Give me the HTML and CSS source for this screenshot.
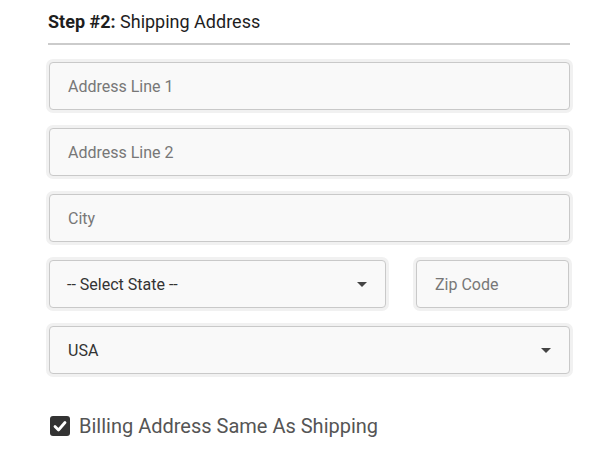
FILE: index.html
```html
<!DOCTYPE html>
<html>
<head>
<meta charset="utf-8">
<link rel="stylesheet" href="styles.css">
</head>
<body>
<div class="form">
  <h2 class="step"><b>Step #2:</b> Shipping Address</h2>
  <div class="fields">
    <div class="field"><span class="ph">Address Line 1</span></div>
    <div class="field"><span class="ph">Address Line 2</span></div>
    <div class="field"><span class="ph">City</span></div>
    <div class="row">
      <div class="field select state"><span class="val">-- Select State --</span><span class="caret"></span></div>
      <div class="field zip"><span class="ph">Zip Code</span></div>
    </div>
    <div class="field select"><span class="val">USA</span><span class="caret"></span></div>
  </div>
  <label class="check">
    <span class="box"><svg width="20" height="20" viewBox="0 0 20 20"><rect x="0" y="0" width="20" height="20" rx="3" fill="#333"/><path d="M5 10.5 L8.5 14 L15 6.5" fill="none" stroke="#fff" stroke-width="2.8" stroke-linecap="round" stroke-linejoin="round"/></svg></span>
    <span class="clabel">Billing Address Same As Shipping</span>
  </label>
</div>
</body>
</html>
```
FILE: styles.css
```css
html, body {
  margin: 0;
  padding: 0;
  background: #fff;
}
body {
  font-family: Roboto, "Liberation Sans", sans-serif;
  color: #222;
}
.form {
  width: 522px;
  margin-left: 48px;
  padding-top: 10px;
}
.step {
  margin: 0;
  font-size: 18px;
  line-height: 24px;
  font-weight: 400;
  color: #1e1e1e;
  padding-bottom: 9px;
  border-bottom: 2px solid #cbcbcb;
}
.step b {
  font-weight: 700;
}
.fields {
  display: flex;
  flex-direction: column;
  gap: 18px;
  padding-top: 17px;
  padding-left: 1px;
}
.field {
  height: 48px;
  box-sizing: border-box;
  border: 1px solid #c9c9c9;
  border-radius: 4px;
  background: #f9f9f9;
  box-shadow: 0 0 0 3px #f1f1f1;
  display: flex;
  align-items: center;
  padding: 0 18px;
  font-size: 16px;
}
.ph {
  color: #777;
}
.val {
  color: #333;
  flex: 1;
}
.select {
  padding-right: 18px;
}
.caret {
  width: 0;
  height: 0;
  border-left: 5px solid transparent;
  border-right: 5px solid transparent;
  border-top: 5px solid #444;
}
.row {
  display: flex;
  gap: 30px;
}
.state {
  width: 337px;
  padding-left: 17px;
}
.zip {
  width: 153px;
}
.check {
  display: flex;
  align-items: center;
  gap: 9px;
  margin-top: 40px;
  margin-left: 2px;
}
.box {
  display: block;
  width: 20px;
  height: 20px;
}
.box svg {
  display: block;
}
.clabel {
  font-size: 20px;
  color: #555;
}
```
